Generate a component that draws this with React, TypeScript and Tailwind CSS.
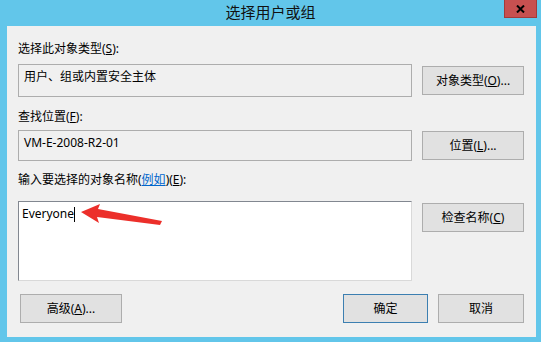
import React from "react";

const font = { fontFamily: '"Noto Sans", "Noto Sans CJK SC", sans-serif' };

function Btn({ children, def = false, w = "w-[102px]" }: { children: React.ReactNode; def?: boolean; w?: string }) {
  return (
    <div
      className={`${w} h-[29px] flex items-center justify-center text-[12px] text-black bg-[#e1e1e1] border ${
        def ? "border-[#3c7fb1]" : "border-[#adadad]"
      }`}
    >
      {children}
    </div>
  );
}

export default function App() {
  return (
    <div className="w-[541px] h-[342px] bg-[#62c6ea] flex flex-col overflow-hidden" style={font}>
      <div className="relative h-[26px] flex items-center justify-center shrink-0">
        <span className="text-[15px] text-[#111] leading-none pb-[2px]">选择用户或组</span>
        <div className="absolute left-[504px] top-0 w-[33px] h-[18px] bg-[#c75050] border border-[#a33a3a] border-t-0 flex items-center justify-center">
          <svg width="9" height="8" viewBox="0 0 9 8">
            <path d="M1 0.5 L8 7.5 M8 0.5 L1 7.5" stroke="#000" strokeWidth="2" />
          </svg>
        </div>
      </div>
      <div className="ml-[7px] w-[529px] h-[311px] bg-[#f0f0f0] pl-[11px] pr-[12px] flex flex-col text-[12px] text-black relative">
        <div className="h-[18px] mt-[14px] flex items-center">
          选择此对象类型(<span className="underline">S</span>):
        </div>
        <div className="flex items-center gap-[10px] mt-[6px]">
          <div className="w-[394px] h-[33px] border border-[#adadad] bg-[#f0f0f0] pl-[5px] pt-[3px] leading-[18px]">
            用户、组或内置安全主体
          </div>
          <Btn>
            对象类型(<span className="underline">O</span>)...
          </Btn>
        </div>
        <div className="h-[18px] mt-[11px] flex items-center">
          查找位置(<span className="underline">F</span>):
        </div>
        <div className="flex items-center gap-[10px] mt-[4px]">
          <div className="w-[394px] h-[31px] border border-[#adadad] bg-[#f0f0f0] pl-[5px] pt-[3px] leading-[18px]">
            VM-E-2008-R2-01
          </div>
          <Btn>
            位置(<span className="underline">L</span>)...
          </Btn>
        </div>
        <div className="h-[18px] mt-[10px] flex items-center">
          输入要选择的对象名称(<span className="text-[#0066cc] underline">例如</span>)(<span className="underline">E</span>):
        </div>
        <div className="flex items-start gap-[10px] mt-[12px]">
          <div className="w-[394px] h-[80px] border border-[#828790] border-r-[#d9d9d9] border-b-[#d9d9d9] bg-white pl-[3px] pt-[3px] leading-[18px] flex items-start">
            <span>Everyone</span>
            <span className="w-px h-[15px] bg-black mt-[2px]" />
          </div>
          <div className="mt-[2px]">
            <Btn>
              检查名称(<span className="underline">C</span>)
            </Btn>
          </div>
        </div>
        <div className="flex items-center mt-[13px]">
          <div className="ml-[2px]">
            <Btn>
              高级(<span className="underline">A</span>)...
            </Btn>
          </div>
          <div className="flex-1" />
          <Btn def w="w-[85px]">确定</Btn>
          <div className="w-[10px]" />
          <Btn w="w-[86px]">取消</Btn>
        </div>
        <svg className="absolute left-0 top-0 pointer-events-none" width="529" height="311" viewBox="7 26 529 311">
          <polygon
            points="81,212 100,204 98,209 162,221 160,225 97,217 99,223"
            fill="#ec2f2a"
          />
        </svg>
      </div>
    </div>
  );
}
